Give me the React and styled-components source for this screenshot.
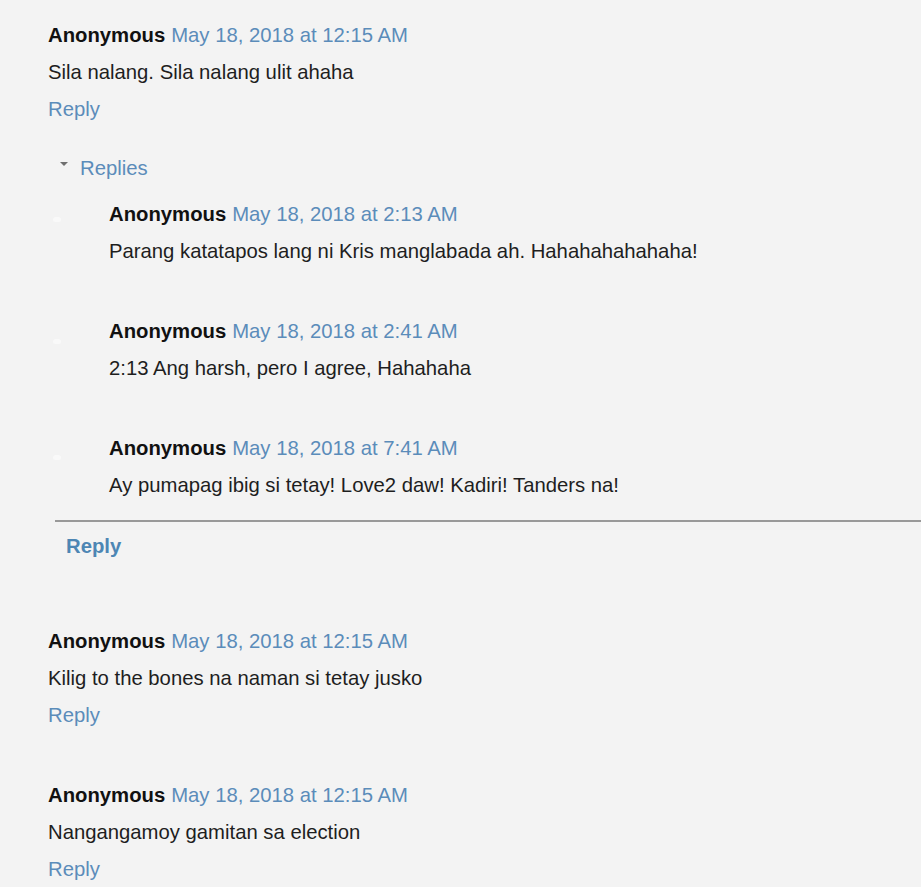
import React from "react";
import styled, { createGlobalStyle } from "styled-components";

const GlobalStyle = createGlobalStyle`
  body {
    margin: 0;
    background: #f3f3f3;
    font-family: "Liberation Sans", Arial, sans-serif;
  }
`;

const Page = styled.div`
  padding: 17px 0 0 48px;
  font-size: 20.3px;
  line-height: 37px;
  color: #1e1e1e;
`;

const Comment = styled.div`
  margin-bottom: ${(p) => p.$gap || 43}px;
`;

const Header = styled.div`
  white-space: nowrap;
`;

const Author = styled.span`
  font-weight: bold;
  color: #111;
`;

const Stamp = styled.a`
  color: #5b8cba;
  text-decoration: none;
  margin-left: 6px;
`;

const Body = styled.div`
  color: #1e1e1e;
`;

const ReplyLink = styled.a`
  display: block;
  color: #5b8cba;
  text-decoration: none;
`;

const Thread = styled.div`
  margin-bottom: 58px;
`;

const Toggle = styled.div`
  display: flex;
  align-items: center;
  padding-left: 12px;
  color: #5b8cba;
  margin-bottom: 9px;
`;

const Caret = styled.span`
  width: 0;
  height: 0;
  border-left: 4px solid transparent;
  border-right: 4px solid transparent;
  border-top: 4px solid #6f6f6f;
  margin-right: 12px;
  margin-top: -9px;
`;

const Nested = styled.div`
  display: flex;
  margin-bottom: ${(p) => (p.$last ? 16 : 43)}px;
`;

const Avatar = styled.span`
  flex: none;
  width: 8px;
  height: 5px;
  margin: ${(p) => p.$top}px 0 0 5px;
  border-radius: 3px;
  background: #f9f9f9;
`;

const NestedText = styled.div`
  margin-left: 48px;
`;

const Divider = styled.hr`
  margin: 0 0 6px 7px;
  border: none;
  height: 2px;
  background: #999;
`;

const ThreadReply = styled.a`
  display: block;
  padding-left: 18px;
  font-weight: bold;
  color: #4d86b4;
  text-decoration: none;
`;

const nested = [
  {
    time: "May 18, 2018 at 2:13 AM",
    text: "Parang katatapos lang ni Kris manglabada ah. Hahahahahahaha!",
    dot: 21,
  },
  {
    time: "May 18, 2018 at 2:41 AM",
    text: "2:13 Ang harsh, pero I agree, Hahahaha",
    dot: 26,
  },
  {
    time: "May 18, 2018 at 7:41 AM",
    text: "Ay pumapag ibig si tetay! Love2 daw! Kadiri! Tanders na!",
    dot: 25,
  },
];

const top = [
  { time: "May 18, 2018 at 12:15 AM", text: "Kilig to the bones na naman si tetay jusko" },
  { time: "May 18, 2018 at 12:15 AM", text: "Nangangamoy gamitan sa election" },
];

const App = () => {
  return (
    <Page>
      <GlobalStyle />
      <Comment $gap={22}>
        <Header>
          <Author>Anonymous</Author>
          <Stamp>May 18, 2018 at 12:15 AM</Stamp>
        </Header>
        <Body>Sila nalang. Sila nalang ulit ahaha</Body>
        <ReplyLink>Reply</ReplyLink>
      </Comment>

      <Thread>
        <Toggle>
          <Caret />
          Replies
        </Toggle>
        {nested.map((n, i) => (
          <Nested key={i} $last={i === nested.length - 1}>
            <Avatar $top={n.dot} />
            <NestedText>
              <Header>
                <Author>Anonymous</Author>
                <Stamp>{n.time}</Stamp>
              </Header>
              <Body>{n.text}</Body>
            </NestedText>
          </Nested>
        ))}
        <Divider />
        <ThreadReply>Reply</ThreadReply>
      </Thread>

      {top.map((c, i) => (
        <Comment key={i}>
          <Header>
            <Author>Anonymous</Author>
            <Stamp>{c.time}</Stamp>
          </Header>
          <Body>{c.text}</Body>
          <ReplyLink>Reply</ReplyLink>
        </Comment>
      ))}
    </Page>
  );
};

export default App;
